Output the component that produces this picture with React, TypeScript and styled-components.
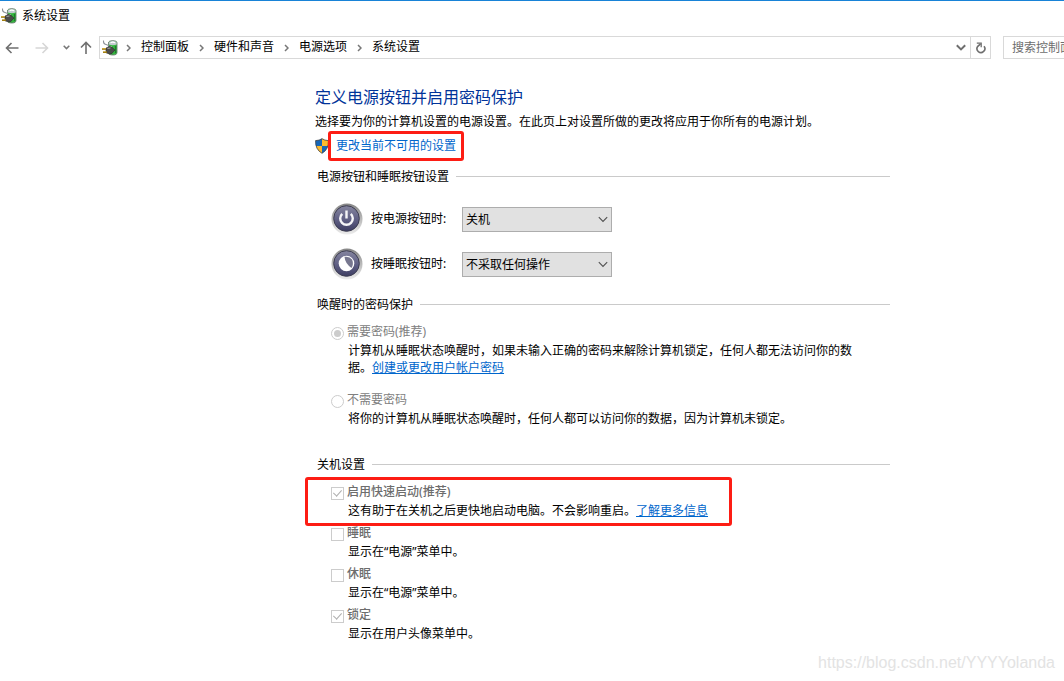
import React from 'react';
import styled, { createGlobalStyle, css } from 'styled-components';

const GlobalStyle = createGlobalStyle`
  *, *::before, *::after { box-sizing: border-box; }
  body {
    margin: 0;
    background: #fff;
    color: #000;
    font-family: "Noto Sans", "Noto Sans CJK SC", sans-serif;
    font-size: 12px;
    line-height: 20px;
  }
  h1, h2, p, ol, ul { margin: 0; padding: 0; font-weight: 400; }
  ol, ul { list-style: none; }
  input, select, button { font: inherit; margin: 0; }
  svg { flex: none; }
`;

const Window = styled.div`
  position: relative;
  min-height: 100vh;
  border-top: 1px solid #1883d7;
  overflow-x: hidden;
`;

const TitleBar = styled.header`
  display: flex;
  align-items: center;
  gap: 5px;
  height: 29px;
  padding-left: 1px;
`;

const NavBar = styled.nav`
  display: flex;
  align-items: center;
  height: 35px;
  padding-left: 4px;
`;

const IconButton = styled.button<{ $width: number }>`
  display: flex;
  align-items: center;
  justify-content: center;
  flex: none;
  width: ${p => p.$width}px;
  height: 20px;
  padding: 0;
  border: 0;
  background: none;
`;

const NavButtons = styled.div`
  display: flex;
  flex: none;
  width: 95px;
  gap: 8px;
`;

const AddressBar = styled.div`
  display: flex;
  align-items: center;
  flex: 1;
  min-width: 0;
  height: 23px;
  padding-left: 2px;
  border: 1px solid #d9d9d9;
`;

const Crumbs = styled.ol`
  display: flex;
  flex: 1;
  line-height: 18px;
  padding-bottom: 2px;
`;

const Crumb = styled.li`
  display: flex;
  align-items: center;
  white-space: nowrap;
  svg { margin: 2px 10px 0 8px; }
  a { padding-right: 2px; color: #000; text-decoration: none; }
`;

const RefreshBox = styled.div`
  display: flex;
  align-items: center;
  height: 21px;
  border-left: 1px solid #d9d9d9;
`;

const SearchInput = styled.input`
  flex: none;
  width: 61px;
  height: 23px;
  margin-left: 12px;
  padding: 0 0 0 8px;
  border: 1px solid #d9d9d9;
  border-right: 0;
  border-radius: 0;
  &::placeholder { color: #6d6d6d; opacity: 1; }
`;

const Main = styled.main`
  max-width: 890px;
  padding: 20px 0 36px 315px;
`;

const Heading = styled.h1`
  font-size: 16px;
  line-height: 24px;
  color: #003399;
`;

const Intro = styled.p`
  margin-top: 3px;
`;

const ElevateRow = styled.div`
  display: flex;
  align-items: center;
  gap: 7px;
  margin-top: 4px;
`;

const highlight = css`
  position: relative;
  &::after {
    content: "";
    position: absolute;
    border: 3px solid #fd1d14;
    border-radius: 3px;
    pointer-events: none;
  }
`;

const ElevateLink = styled.a`
  ${highlight}
  color: #0066cc;
  text-decoration: none;
  &::after { inset: -5px -8px; }
`;

const Link = styled.a`
  color: #0066cc;
  text-decoration: underline;
`;

const Section = styled.section<{ $top: number }>`
  margin-top: ${p => p.$top}px;
  padding-left: 2px;
`;

const SectionTitle = styled.h2`
  display: flex;
  align-items: center;
  gap: 7px;
  font-size: 12px;
  line-height: 20px;
  &::after {
    content: "";
    flex: 1;
    height: 1px;
    margin-bottom: 2px;
    background: #cacaca;
  }
`;

const ButtonRows = styled.div`
  display: grid;
  gap: 13px;
  padding: 16px 0 0 14px;
`;

const ButtonRow = styled.div`
  display: flex;
  align-items: center;
  gap: 8px;
  label { width: 83px; }
`;

const SelectBox = styled.div`
  position: relative;
  width: 150px;
  height: 25px;
  svg {
    position: absolute;
    right: 4px;
    top: 9px;
    pointer-events: none;
  }
`;

const Select = styled.select`
  appearance: none;
  width: 100%;
  height: 100%;
  padding: 2px 20px 0 3px;
  border: 1px solid #adadad;
  border-radius: 0;
  background: #e1e1e1;
  color: #000;
`;

const Options = styled.div<{ $gap: number }>`
  display: flex;
  flex-direction: column;
  gap: ${p => p.$gap}px;
  padding: 6px 0 0 14px;
`;

const Option = styled.div<{ $marked?: boolean }>`
  ${p => p.$marked && css`
    ${highlight}
    align-self: flex-start;
    &::after { inset: -4px -24px -7px -26px; }
  `}
`;

const OptionLabel = styled.label<{ $strong?: boolean }>`
  display: flex;
  align-items: center;
  gap: 3px;
  line-height: 21px;
  color: ${p => (p.$strong ? '#6d6d6d' : '#808080')};
  font-weight: ${p => (p.$strong ? 500 : 400)};
`;

const Description = styled.p`
  max-width: 526px;
  padding-left: 17px;
  line-height: 17px;
`;

const Toggle = styled.input`
  appearance: none;
  position: relative;
  top: 2px;
  flex: none;
  width: 13px;
  height: 13px;
  border: 1px solid #cccccc;
  background: #fff;
  &[type='radio'] { border-radius: 50%; }
  &:checked::after { content: ""; position: absolute; }
  &[type='radio']:checked::after {
    inset: 2px;
    border-radius: 50%;
    background: #cccccc;
  }
  &[type='checkbox']:checked::after {
    left: 3px;
    top: 0;
    width: 5px;
    height: 8px;
    border: solid #b0b0b0;
    border-width: 0 1px 1px 0;
    transform: rotate(42deg);
  }
`;

const Watermark = styled.div`
  position: absolute;
  right: 9px;
  bottom: 8px;
  font-family: "Liberation Sans", sans-serif;
  font-size: 16px;
  line-height: 20px;
  color: #e3e3e3;
`;

const PowerPlugIcon = () => (
  <svg width="16" height="16" viewBox="0 0 16 16" aria-hidden="true">
    <path d="M6.500 3Q6.500 .700 10.800 .700T15 3V12.500Q15 15 10.800 15T6.500 12.500Z" fill="#35b53f" stroke="#5d6b63" strokeWidth=".8" />
    <path d="M6.800 4.500V3Q7 1 10.800 1T14.700 3V4.500Q10.800 6 6.800 4.500Z" fill="#c3cad0" />
    <path d="M8.500 2.700Q10.800 1.700 13 2.700" fill="none" stroke="#fff" strokeWidth="1.200" />
    <path d="M9 6V8.500" stroke="#c9f7c5" strokeWidth="1.500" />
    <path d="M13.500 6V13" stroke="#1c7d2a" strokeWidth="1.200" />
    <path d="M1.500 .500Q1.200 4 4 4.500T7.500 7" fill="none" stroke="#8a8f96" strokeWidth="1.100" />
    <path d="M4 8L7.500 6.500Q11 7 11.500 9L13 10L11.500 11.500Q10.500 14 7.500 14L4 12.800Z" fill="#4b4b4b" stroke="#2a2a2a" strokeWidth=".6" />
    <path d="M5.500 8.500L8.500 8" stroke="#a5a5a5" />
    <path d="M0 9H4M1 12.300H5" stroke="#8a6a08" strokeWidth="1.600" />
    <path d="M0 8.600H4M1 11.900H4.500" stroke="#e0b637" strokeWidth=".7" />
  </svg>
);

const Arrow = ({ kind }: { kind: 'back' | 'forward' | 'up' }) => {
  const d = {
    back: 'M13.500 7H1.500M6.500 2L1.500 7L6.500 12',
    forward: 'M.500 7H12.500M7.500 2L12.500 7L7.500 12',
    up: 'M7 13V1.500M2 6.500L7 1.500L12 6.500',
  }[kind];
  return (
    <svg width="14" height="14" viewBox="0 0 14 14" aria-hidden="true">
      <path d={d} fill="none" stroke={kind === 'forward' ? '#d6d6d6' : '#6f6f6f'} strokeWidth="1.600" />
    </svg>
  );
};

const ChevronDown = ({ width, stroke, color }: { width: number; stroke: number; color: string }) => (
  <svg width={width} height={width === 7 ? 5 : 7} viewBox={width === 7 ? '0 0 7 5' : '0 0 10 7'} aria-hidden="true">
    <path d={width === 7 ? 'M.700 .800L3.500 3.600L6.300 .800' : 'M.800 1.200L5 5.400L9.200 1.200'} fill="none" stroke={color} strokeWidth={stroke} />
  </svg>
);

const CrumbChevron = () => (
  <svg width="5" height="8" viewBox="0 0 5 8" aria-hidden="true">
    <path d="M1 1L4 4L1 7" fill="none" stroke="#777" strokeWidth="1.500" />
  </svg>
);

const RefreshIcon = () => (
  <svg width="12" height="12" viewBox="0 0 12 12" aria-hidden="true">
    <path d="M9 4.200A3.900 3.900 0 1 1 2.800 4.300L5.500 1.800" fill="none" stroke="#6f6f6f" strokeWidth="1.600" />
    <path d="M1.800 1.200H6.200V5.200" fill="none" stroke="#6f6f6f" strokeWidth="1.300" />
  </svg>
);

const ShieldIcon = () => (
  <svg width="14" height="16" viewBox="0 0 14 16" aria-hidden="true">
    <clipPath id="shield"><path d="M7 .500Q9.500 2.500 13.500 2.500Q14 11.500 7 15.500Q0 11.500 .500 2.500Q4.500 2.500 7 .500Z" /></clipPath>
    <g clipPath="url(#shield)">
      <path d="M0 0H7V8H0ZM7 8H14V16H7Z" fill="#1767b8" />
      <path d="M7 0H14V8H7ZM0 8H7V16H0Z" fill="#fdb92c" />
    </g>
    <path d="M7 .700Q9.500 2.500 13.400 2.600Q13.800 11.500 7 15.300Q.200 11.500 .600 2.600Q4.500 2.500 7 .700Z" fill="none" stroke="#444" strokeWidth=".8" />
  </svg>
);

const RoundIcon = ({ kind }: { kind: 'power' | 'sleep' }) => (
  <svg width="32" height="32" viewBox="0 0 32 32" aria-hidden="true">
    <defs>
      <linearGradient id={`${kind}-ring`} x1="0" y1="0" x2="0" y2="1">
        <stop offset="0" stopColor="#858585" />
        <stop offset="1" stopColor="#ededed" />
      </linearGradient>
      <linearGradient id={`${kind}-face`} x1="0" y1="0" x2="0" y2="1">
        <stop offset="0" stopColor="#85859f" />
        <stop offset=".55" stopColor="#5f5f84" />
        <stop offset="1" stopColor="#3d3d62" />
      </linearGradient>
    </defs>
    <circle cx="16" cy="16" r="15.500" fill={`url(#${kind}-ring)`} />
    <circle cx="15.500" cy="15.500" r="12.800" fill={`url(#${kind}-face)`} stroke="#3c3c50" strokeWidth="1" />
    {kind === 'power' ? (
      <path d="M11.200 10.800A6.300 6.300 0 1 0 19.800 10.800M15.500 7.500V15.500" fill="none" stroke="#f5f5f8" strokeWidth="2.400" />
    ) : (
      <>
        <circle cx="15.500" cy="15.500" r="7.800" fill="#fff" />
        <path d="M13.500 8.800Q18.500 8 21 11.500Q23 16 20.500 20Q14 15.500 13.500 8.800Z" fill="#77778f" />
      </>
    )}
  </svg>
);

const crumbs = ['控制面板', '硬件和声音', '电源选项', '系统设置'];

const buttons = [
  { kind: 'power' as const, label: '按电源按钮时:', value: '关机' },
  { kind: 'sleep' as const, label: '按睡眠按钮时:', value: '不采取任何操作' },
];

const shutdownOptions = [
  { id: 'fast', label: '启用快速启动(推荐)', text: '这有助于在关机之后更快地启动电脑。不会影响重启。', link: '了解更多信息', checked: true },
  { id: 'sleep', label: '睡眠', text: '显示在“电源”菜单中。', checked: false },
  { id: 'hibernate', label: '休眠', text: '显示在“电源”菜单中。', checked: false },
  { id: 'lock', label: '锁定', text: '显示在用户头像菜单中。', checked: true },
];

export default function App() {
  return (
    <Window lang="zh-CN">
      <GlobalStyle />
      <TitleBar>
        <PowerPlugIcon />
        <span>系统设置</span>
      </TitleBar>
      <NavBar>
        <NavButtons>
          <IconButton $width={16} aria-label="后退"><Arrow kind="back" /></IconButton>
          <IconButton $width={28} aria-label="前进" disabled><Arrow kind="forward" /></IconButton>
          <IconButton $width={4} aria-label="最近位置"><ChevronDown width={7} stroke={1.5} color="#777" /></IconButton>
          <IconButton $width={20} aria-label="上移"><Arrow kind="up" /></IconButton>
        </NavButtons>
        <AddressBar>
          <PowerPlugIcon />
          <Crumbs>
            {crumbs.map(name => (
              <Crumb key={name}><CrumbChevron /><a href="#">{name}</a></Crumb>
            ))}
          </Crumbs>
          <IconButton $width={19} aria-label="历史记录"><ChevronDown width={10} stroke={2} color="#6f6f6f" /></IconButton>
          <RefreshBox>
            <IconButton $width={19} aria-label="刷新"><RefreshIcon /></IconButton>
          </RefreshBox>
        </AddressBar>
        <SearchInput type="text" placeholder="搜索控制面板" aria-label="搜索控制面板" />
      </NavBar>
      <Main>
        <Heading>定义电源按钮并启用密码保护</Heading>
        <Intro>选择要为你的计算机设置的电源设置。在此页上对设置所做的更改将应用于你所有的电源计划。</Intro>
        <ElevateRow>
          <ShieldIcon />
          <ElevateLink href="#">更改当前不可用的设置</ElevateLink>
        </ElevateRow>
        <Section $top={11}>
          <SectionTitle>电源按钮和睡眠按钮设置</SectionTitle>
          <ButtonRows>
            {buttons.map(b => (
              <ButtonRow key={b.kind}>
                <RoundIcon kind={b.kind} />
                <label htmlFor={b.kind + '-action'}>{b.label}</label>
                <SelectBox>
                  <Select id={b.kind + '-action'} defaultValue={b.value}>
                    <option>{b.value}</option>
                  </Select>
                  <ChevronDown width={10} stroke={1.1} color="#505050" />
                </SelectBox>
              </ButtonRow>
            ))}
          </ButtonRows>
        </Section>
        <Section $top={15}>
          <SectionTitle>唤醒时的密码保护</SectionTitle>
          <Options $gap={13}>
            <Option>
              <OptionLabel>
                <Toggle type="radio" name="password" defaultChecked disabled />
                需要密码(推荐)
              </OptionLabel>
              <Description>
                计算机从睡眠状态唤醒时，如果未输入正确的密码来解除计算机锁定，任何人都无法访问你的数据。<Link href="#">创建或更改用户帐户密码</Link>
              </Description>
            </Option>
            <Option>
              <OptionLabel>
                <Toggle type="radio" name="password" disabled />
                不需要密码
              </OptionLabel>
              <Description>将你的计算机从睡眠状态唤醒时，任何人都可以访问你的数据，因为计算机未锁定。</Description>
            </Option>
          </Options>
        </Section>
        <Section $top={28}>
          <SectionTitle>关机设置</SectionTitle>
          <Options $gap={3}>
            {shutdownOptions.map(o => (
              <Option key={o.id} $marked={o.id === 'fast'}>
                <OptionLabel $strong>
                  <Toggle type="checkbox" defaultChecked={o.checked} disabled />
                  {o.label}
                </OptionLabel>
                <Description>
                  {o.text}
                  {o.link && <Link href="#">{o.link}</Link>}
                </Description>
              </Option>
            ))}
          </Options>
        </Section>
      </Main>
      <Watermark>https://blog.csdn.net/YYYYolanda</Watermark>
    </Window>
  );
}
